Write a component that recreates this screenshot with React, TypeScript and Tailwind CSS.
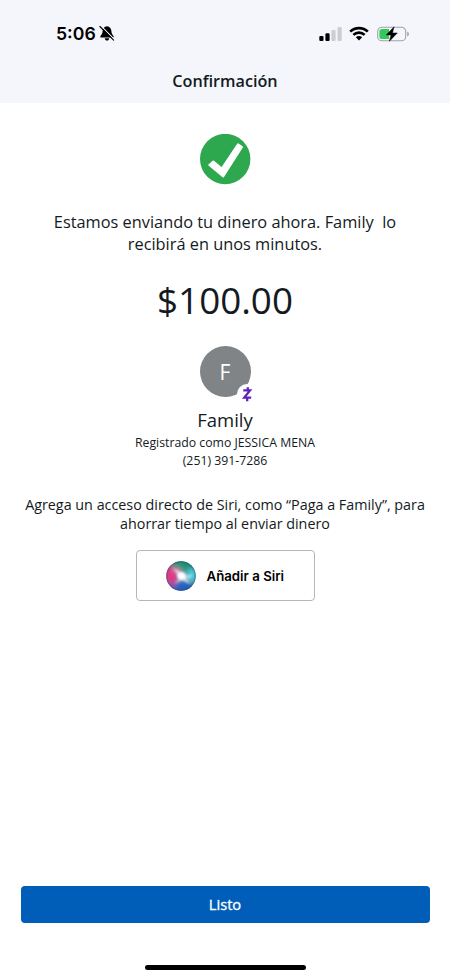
const sans = "font-['Open_Sans','Noto_Sans',sans-serif]";

function BellOff() {
  return (
    <svg width="16" height="17" viewBox="0 0 16 17" className="ml-[3px]">
      <path d="M8 1.2C5 1.4 3.7 3.7 3.6 6.2C3.5 9 2.2 10 1.4 11.2C1.1 12 1.5 12.6 2.2 12.6H13.8C14.5 12.6 14.9 12 14.6 11.2C13.8 10 12.5 9 12.4 6.2C12.3 3.7 11 1.4 8 1.2Z" fill="#000" />
      <path d="M5.7 13.3H10.3C10 14.9 9.2 15.6 8 15.6S6 14.9 5.7 13.3Z" fill="#000" />
      <path d="M1.9 .9L15.3 14.3" stroke="#f4f6fb" strokeWidth="1.2" />
      <path d="M.9 1.5L14.6 15.2" stroke="#000" strokeWidth="1.1" strokeLinecap="round" />
    </svg>
  );
}

function Signal() {
  return (
    <svg width="24" height="16" viewBox="0 0 24 16">
      <rect x="0.3" y="10" width="4.2" height="5" rx="1.1" fill="#000" />
      <rect x="6.4" y="7.3" width="4.2" height="7.7" rx="1.1" fill="#000" />
      <rect x="12.4" y="4" width="4.2" height="11" rx="1.1" fill="#cccdd2" />
      <rect x="18.5" y="1" width="4.2" height="14" rx="1.1" fill="#cccdd2" />
    </svg>
  );
}

function Wifi() {
  return (
    <svg width="20" height="15" viewBox="0 0 20 15">
      <g fill="none" stroke="#000" strokeWidth="2.7">
        <path d="M1.2 5.6C6 .9 14 .9 18.8 5.6" />
        <path d="M4.4 8.9C7.5 5.9 12.5 5.9 15.6 8.9" />
      </g>
      <path d="M10 14.4L6.8 11.2C8.5 9.7 11.5 9.7 13.2 11.2Z" fill="#000" />
    </svg>
  );
}

function Battery() {
  return (
    <svg width="33" height="16" viewBox="0 0 33 16">
      <rect x=".7" y="1.2" width="28" height="13.6" rx="4.4" fill="none" stroke="#a1a3a7" strokeWidth="1.1" />
      <path d="M5.2 3H12V13H5.2Q2.4 13 2.4 10.4V5.6Q2.4 3 5.2 3Z" fill="#34c759" />
      <path d="M30.2 5.6Q32 6.2 32 8T30.2 10.4Z" fill="#a1a3a7" />
      <path d="M17 .8L9.3 8.9H14L12.4 15.2L20.3 7H15.5Z" fill="#000" stroke="#000" strokeWidth=".5" strokeLinejoin="round" />
    </svg>
  );
}

function SiriOrb() {
  return (
    <svg width="30" height="30" viewBox="0 0 30 30">
      <defs>
        <clipPath id="orb"><circle cx="15" cy="15" r="14.8" /></clipPath>
        <filter id="soft" x="-50%" y="-50%" width="200%" height="200%"><feGaussianBlur stdDeviation="2" /></filter>
        <filter id="glow" x="-50%" y="-50%" width="200%" height="200%"><feGaussianBlur stdDeviation="1.3" /></filter>
        <radialGradient id="rim"><stop offset=".85" stopColor="#26354e" stopOpacity="0" /><stop offset="1" stopColor="#26354e" stopOpacity=".45" /></radialGradient>
      </defs>
      <g clipPath="url(#orb)">
        <rect width="30" height="30" fill="#7590b4" />
        <g filter="url(#soft)">
          <ellipse cx="18" cy="3" rx="12" ry="7" fill="#1f9274" />
          <ellipse cx="5" cy="14" rx="7" ry="9" fill="#e23884" />
          <ellipse cx="26" cy="14" rx="6" ry="7" fill="#4ac3d2" />
          <ellipse cx="18" cy="27" rx="11" ry="6" fill="#2460bd" />
          <ellipse cx="6" cy="25" rx="4" ry="4" fill="#914dad" />
          <ellipse cx="11" cy="9" rx="5" ry="3" fill="#ba809d" />
        </g>
        <g filter="url(#glow)" fill="#fff">
          <ellipse cx="15.5" cy="15" rx="4.5" ry="4" opacity=".95" />
          <path d="M7 7L18 12L24 23L14 18Z" opacity=".6" />
          <path d="M15 15L27 13L24 18Z" opacity=".45" />
          <path d="M15 15L8 23L19 18Z" opacity=".4" />
        </g>
        <circle cx="15" cy="15" r="14.8" fill="url(#rim)" />
      </g>
    </svg>
  );
}

export default function App() {
  return (
    <div className={`flex h-[978px] w-[450px] flex-col overflow-hidden bg-white text-[#141a22] ${sans}`}>
      <header className="h-[103px] shrink-0 bg-[#f4f6fb]">
        <div className="flex h-[67px] items-center pr-[40px] pl-[56px]">
          <span className="font-['Inter',sans-serif] text-[17.7px] leading-6 font-semibold text-black">5:06</span>
          <BellOff />
          <div className="ml-auto flex items-center">
            <Signal />
            <span className="ml-[6px]"><Wifi /></span>
            <span className="ml-[8px]"><Battery /></span>
          </div>
        </div>
        <h1 className="text-center text-[16.2px] leading-[28px] font-semibold">Confirmación</h1>
      </header>

      <main className="flex flex-col items-center pt-[31px] text-center">
        <svg width="51" height="51" viewBox="0 0 51 51">
          <circle cx="25.2" cy="25" r="25.2" fill="#2ea84f" />
          <path d="M9.3 31L13.3 27.6L21.8 34.6L38 10.4L42 13L23.2 42.4Z" fill="#fff" stroke="#fff" strokeWidth="2" strokeLinejoin="round" />
        </svg>
        <p className="mt-[26px] text-[16.35px] leading-[22px] whitespace-pre">{"Estamos enviando tu dinero ahora. Family  lo\nrecibirá en unos minutos."}</p>
        <p className="mt-[20px] text-[36.8px] leading-[50px]">$100.00</p>
        <div className="relative mt-[21px] flex size-[51px] items-center justify-center rounded-full bg-[#818486] text-[21px] leading-[51px] text-white">
          <span className="pt-px">F</span>
          <svg className="absolute top-[38px] left-[37px]" width="20" height="20" viewBox="0 0 20 20">
            <circle cx="10" cy="10" r="10" fill="#fff" />
            <path d="M6.3 6.4H13L7.3 13.6H14.2M10.8 3.2V6.4M10.2 13.6V17.2" fill="none" stroke="#6220bd" strokeWidth="2.3" />
          </svg>
        </div>
        <h2 className="mt-[11px] text-[18.5px] leading-6">Family</h2>
        <p className="mt-[2px] text-[12.27px] leading-[18px]">Registrado como JESSICA MENA</p>
        <p className="text-[12.27px] leading-[18px]">(251) 391-7286</p>
        <p className="mt-[25px] text-[14.33px] leading-[19px] whitespace-pre">{"Agrega un acceso directo de Siri, como “Paga a Family”, para\nahorrar tiempo al enviar dinero"}</p>
        <button className="mt-[17px] flex h-[51px] w-[179px] items-center rounded-[4px] border border-[#b5b6b8] pl-[29px] font-['Inter',sans-serif] text-[13.25px] font-semibold text-black">
          <SiriOrb />
          <span className="ml-[11px] pt-[2px]">Añadir a Siri</span>
        </button>
      </main>

      <footer className="mt-auto flex flex-col items-center pb-[8px]">
        <button className="h-[37px] w-[409px] rounded-[4px] bg-[#005eb8] text-[14.7px] text-white [-webkit-text-stroke:0.3px_white]">Listo</button>
        <div className="mt-[42px] h-[5px] w-[161px] rounded-full bg-black" />
      </footer>
    </div>
  );
}
